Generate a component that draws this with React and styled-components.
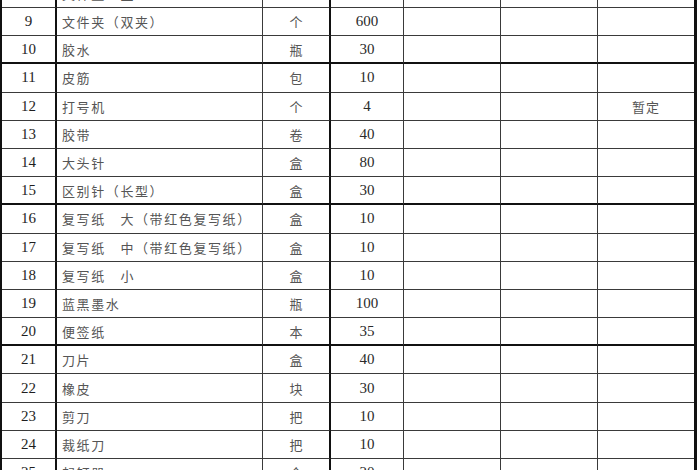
import React from "react"
import styled, { createGlobalStyle } from "styled-components"

const rows = [
   { no: 8, name: "文件整理盒", unit: "个", qty: "1000" },
   { no: 9, name: "文件夹（双夹）", unit: "个", qty: "600" },
   { no: 10, name: "胶水", unit: "瓶", qty: "30", thick: true },
   { no: 11, name: "皮筋", unit: "包", qty: "10" },
   { no: 12, name: "打号机", unit: "个", qty: "4", note: "暂定" },
   { no: 13, name: "胶带", unit: "卷", qty: "40" },
   { no: 14, name: "大头针", unit: "盒", qty: "80" },
   { no: 15, name: "区别针（长型）", unit: "盒", qty: "30", thick: true },
   { no: 16, name: "复写纸\u3000大（带红色复写纸）", unit: "盒", qty: "10" },
   { no: 17, name: "复写纸\u3000中（带红色复写纸）", unit: "盒", qty: "10" },
   { no: 18, name: "复写纸\u3000小", unit: "盒", qty: "10" },
   { no: 19, name: "蓝黑墨水", unit: "瓶", qty: "100" },
   { no: 20, name: "便签纸", unit: "本", qty: "35", thick: true },
   { no: 21, name: "刀片", unit: "盒", qty: "40" },
   { no: 22, name: "橡皮", unit: "块", qty: "30" },
   { no: 23, name: "剪刀", unit: "把", qty: "10" },
   { no: 24, name: "裁纸刀", unit: "把", qty: "10" },
   { no: 25, name: "起钉器", unit: "个", qty: "20", thick: true },
]

const GlobalStyle = createGlobalStyle`
   html, body {
      margin: 0;
      padding: 0;
      background: #fff;
   }
`

const App = () => {
   return (
      <>
         <GlobalStyle />
         <Viewport>
            <Sheet>
               {rows.map((r) => (
                  <React.Fragment key={r.no}>
                     <NoCell $thick={r.thick}>{r.no}</NoCell>
                     <NameCell $thick={r.thick}>{r.name}</NameCell>
                     <UnitCell $thick={r.thick}>{r.unit}</UnitCell>
                     <QtyCell $thick={r.thick}>{r.qty}</QtyCell>
                     <Cell $thick={r.thick} />
                     <Cell $thick={r.thick} />
                     <NoteCell $thick={r.thick}>{r.note}</NoteCell>
                  </React.Fragment>
               ))}
            </Sheet>
         </Viewport>
      </>
   )
}

export default App

const Viewport = styled.div`
   width: 700px;
   height: 470px;
   overflow: hidden;
   background: #fff;
`

const Sheet = styled.div`
   width: 692px;
   margin-top: -20.2px;
   display: grid;
   grid-template-columns: 55px 206px 68px 73px 97px 97px 96px;
   grid-auto-rows: 28.2px;
   border-left: 2px solid #111;
   border-right: 3px solid #111;
`

const Cell = styled.div`
   box-sizing: border-box;
   display: flex;
   align-items: center;
   justify-content: center;
   border-right: 1px solid #3a3a3a;
   border-bottom: ${(p) => (p.$thick ? "2px solid #111" : "1px solid #3a3a3a")};
   font-family: "Liberation Serif", "Noto Sans CJK SC", serif;
   font-size: 15px;
   color: #2a2a2a;
   white-space: nowrap;
   overflow: hidden;
`

const NoCell = styled(Cell)`
   border-right: 2px solid #111;
   color: #1e1e1e;
`

const NameCell = styled(Cell)`
   justify-content: flex-start;
   padding-left: 5px;
   font-family: "Noto Sans CJK SC", "Liberation Serif", sans-serif;
   font-size: 13px;
   letter-spacing: 1.6px;
   color: #555;
`

const UnitCell = styled(Cell)`
   border-right: 2px solid #111;
   font-family: "Noto Sans CJK SC", sans-serif;
   font-size: 13px;
   color: #555;
`

const QtyCell = styled(Cell)``

const NoteCell = styled(Cell)`
   border-right: none;
   font-family: "Noto Sans CJK SC", sans-serif;
   font-size: 13px;
   letter-spacing: 1px;
   color: #555;
`
